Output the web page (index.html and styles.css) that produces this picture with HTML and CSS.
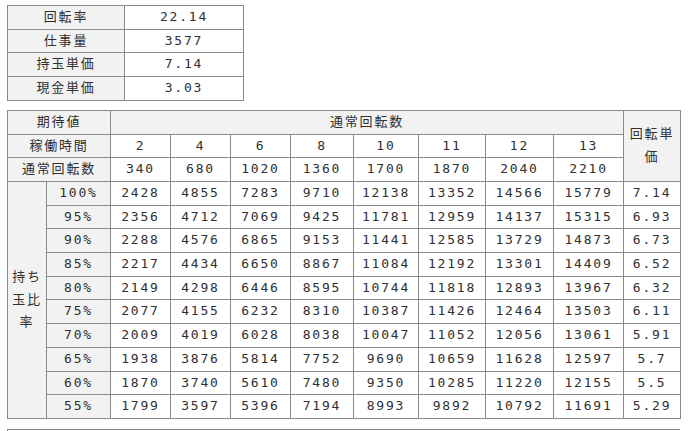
FILE: index.html
```html
<!DOCTYPE html>
<html lang="ja">
<head>
<meta charset="utf-8">
<link rel="stylesheet" href="styles.css">
</head>
<body>
<table class="summary">
  <colgroup><col class="s1"><col class="s2"></colgroup>
  <tr><th>回転率</th><td>22.14</td></tr>
  <tr><th>仕事量</th><td>3577</td></tr>
  <tr><th>持玉単価</th><td>7.14</td></tr>
  <tr><th>現金単価</th><td>3.03</td></tr>
</table>

<table class="grid">
  <colgroup>
    <col class="c0"><col class="c1"><col class="c2"><col class="c3"><col class="c4"><col class="c5">
    <col class="c6"><col class="c7"><col class="c8"><col class="c9"><col class="c10">
  </colgroup>
  <tr><th colspan="2">期待値</th><th colspan="8">通常回転数</th><th rowspan="3">回転単価</th></tr>
  <tr><th colspan="2">稼働時間</th><td>2</td><td>4</td><td>6</td><td>8</td><td>10</td><td>11</td><td>12</td><td>13</td></tr>
  <tr><th colspan="2">通常回転数</th><td>340</td><td>680</td><td>1020</td><td>1360</td><td>1700</td><td>1870</td><td>2040</td><td>2210</td></tr>
  <tr><th rowspan="10">持ち玉比率</th><th>100%</th><td>2428</td><td>4855</td><td>7283</td><td>9710</td><td>12138</td><td>13352</td><td>14566</td><td>15779</td><td>7.14</td></tr>
  <tr><th>95%</th><td>2356</td><td>4712</td><td>7069</td><td>9425</td><td>11781</td><td>12959</td><td>14137</td><td>15315</td><td>6.93</td></tr>
  <tr><th>90%</th><td>2288</td><td>4576</td><td>6865</td><td>9153</td><td>11441</td><td>12585</td><td>13729</td><td>14873</td><td>6.73</td></tr>
  <tr><th>85%</th><td>2217</td><td>4434</td><td>6650</td><td>8867</td><td>11084</td><td>12192</td><td>13301</td><td>14409</td><td>6.52</td></tr>
  <tr><th>80%</th><td>2149</td><td>4298</td><td>6446</td><td>8595</td><td>10744</td><td>11818</td><td>12893</td><td>13967</td><td>6.32</td></tr>
  <tr><th>75%</th><td>2077</td><td>4155</td><td>6232</td><td>8310</td><td>10387</td><td>11426</td><td>12464</td><td>13503</td><td>6.11</td></tr>
  <tr><th>70%</th><td>2009</td><td>4019</td><td>6028</td><td>8038</td><td>10047</td><td>11052</td><td>12056</td><td>13061</td><td>5.91</td></tr>
  <tr><th>65%</th><td>1938</td><td>3876</td><td>5814</td><td>7752</td><td>9690</td><td>10659</td><td>11628</td><td>12597</td><td>5.7</td></tr>
  <tr><th>60%</th><td>1870</td><td>3740</td><td>5610</td><td>7480</td><td>9350</td><td>10285</td><td>11220</td><td>12155</td><td>5.5</td></tr>
  <tr><th>55%</th><td>1799</td><td>3597</td><td>5396</td><td>7194</td><td>8993</td><td>9892</td><td>10792</td><td>11691</td><td>5.29</td></tr>
</table>

<div class="next"><span class="mark"></span></div>
</body>
</html>
```

FILE: styles.css
```css
html, body {
  background: #ffffff;
}
body {
  margin: 5px 0 0 7px;
  font-family: "DejaVu Sans Mono", "Noto Sans CJK JP", monospace;
  font-size: 13px;
  color: #303030;
}
table {
  border-collapse: collapse;
  table-layout: fixed;
}
th, td {
  border: 1px solid #8a8a8a;
  padding: 0 4px;
  line-height: 22.7px;
  text-align: center;
  vertical-align: middle;
  letter-spacing: 1.8px;
  font-weight: normal;
  white-space: normal;
}
th {
  background: #f2f2f2;
}
td {
  background: #ffffff;
}
.summary {
  width: 236px;
  margin-bottom: 9px;
}
.s1 { width: 117px; }
.s2 { width: 119px; }

.grid {
  width: 673px;
}
.c0 { width: 39px; }
.c1 { width: 64px; }
.c2 { width: 60px; }
.c3 { width: 60px; }
.c4 { width: 60px; }
.c5 { width: 63px; }
.c6 { width: 65px; }
.c7 { width: 67px; }
.c8 { width: 68px; }
.c9 { width: 70px; }
.c10 { width: 57px; }

.next {
  margin-top: 10px;
  width: 672px;
  height: 10px;
  border-top: 1px solid #8a8a8a;
  border-left: 1px solid #8a8a8a;
  position: relative;
}
.mark {
  position: absolute;
  left: 1px;
  top: 1px;
  width: 8px;
  height: 4px;
  border-top: 2px solid #444;
  border-left: 2px solid #444;
  border-right: 2px solid #444;
}
```
